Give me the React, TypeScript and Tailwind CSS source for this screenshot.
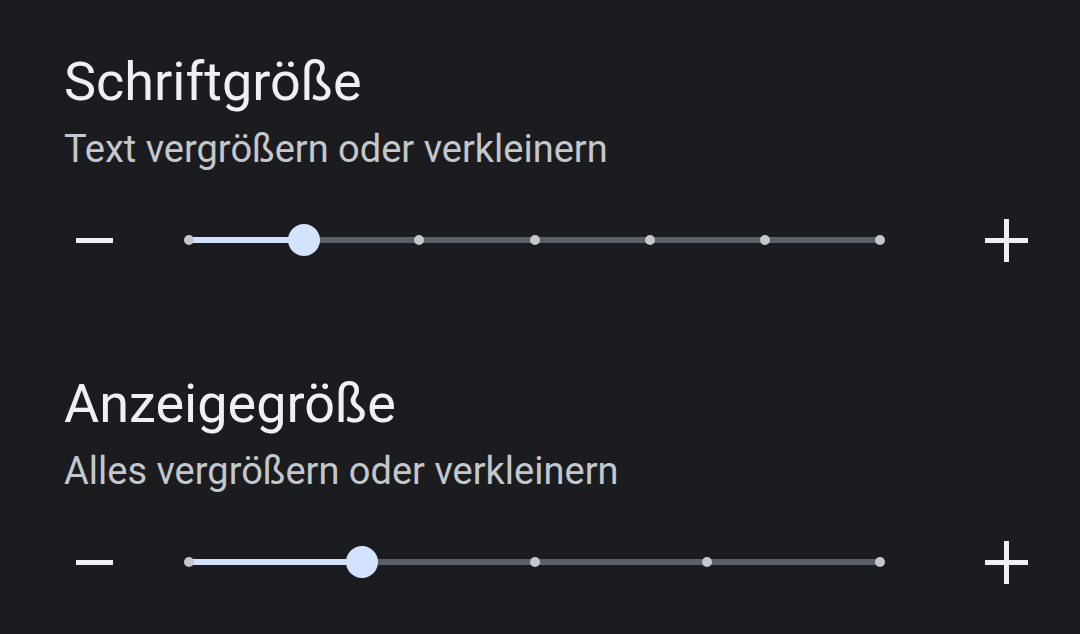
const font = { fontFamily: "Roboto, 'Noto Sans', sans-serif" };

function SizeSlider({ steps, value }: { steps: number; value: number }) {
  const pct = (value / (steps - 1)) * 100;
  return (
    <div className="mt-[26px] flex h-[80px] items-center pl-[76px]">
      <div className="h-[5px] w-[37px] bg-[#eef0f5]" />
      <div className="relative ml-[76px] h-[6px] w-[691px] rounded-full bg-[#5a6067]">
        <div className="absolute left-0 top-0 h-[6px] rounded-full bg-[#d3e3fd]" style={{ width: `${pct}%` }} />
        {Array.from({ length: steps }).map((_, i) => (
          <div
            key={i}
            className="absolute top-1/2 h-[10px] w-[10px] -translate-x-1/2 -translate-y-1/2 rounded-full bg-[#c4c7cc]"
            style={{ left: `${(i / (steps - 1)) * 100}%` }}
          />
        ))}
        <div
          className="absolute top-1/2 h-[32px] w-[32px] -translate-x-1/2 -translate-y-1/2 rounded-full bg-[#d3e3fd]"
          style={{ left: `${pct}%` }}
        />
      </div>
      <div className="relative ml-[105px] h-[43px] w-[43px]">
        <div className="absolute left-0 top-[19px] h-[5px] w-[43px] bg-[#eef0f5]" />
        <div className="absolute left-[19px] top-0 h-[43px] w-[5px] bg-[#eef0f5]" />
      </div>
    </div>
  );
}

function Section({ title, subtitle, steps, value }: { title: string; subtitle: string; steps: number; value: number }) {
  return (
    <div className="flex flex-col">
      <div className="pl-[64px] text-[54px] leading-[64px] text-[#eef0f5]">{title}</div>
      <div className="mt-[10px] pl-[64px] text-[38px] leading-[50px] text-[#c4c7cc]">{subtitle}</div>
      <SizeSlider steps={steps} value={value} />
    </div>
  );
}

export default function App() {
  return (
    <div className="flex h-[634px] w-[1080px] flex-col gap-[92px] overflow-hidden bg-[#1b1c20] pt-[50px]" style={font}>
      <Section title="Schriftgröße" subtitle="Text vergrößern oder verkleinern" steps={7} value={1} />
      <Section title="Anzeigegröße" subtitle="Alles vergrößern oder verkleinern" steps={5} value={1} />
    </div>
  );
}
